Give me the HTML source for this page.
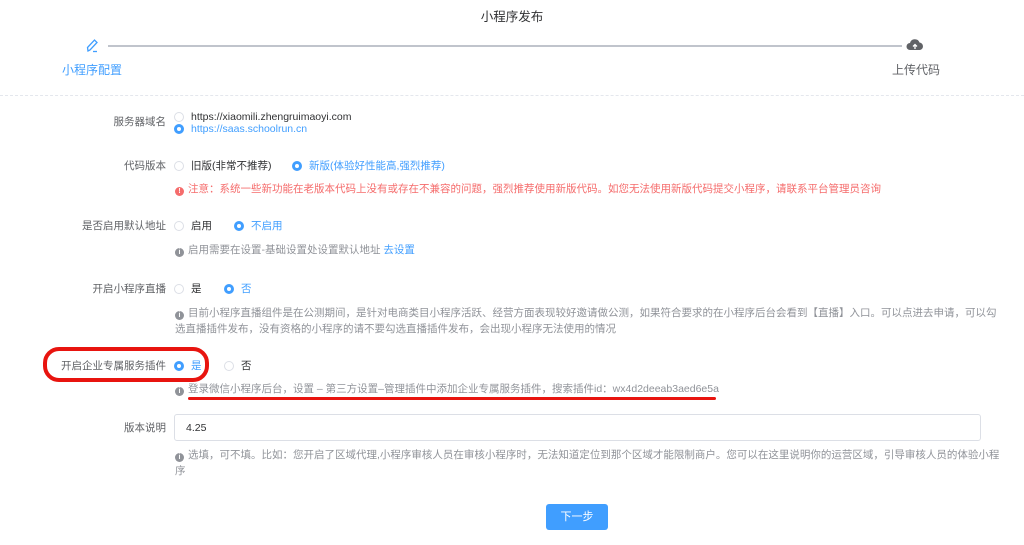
<!DOCTYPE html>
<html><head><meta charset="utf-8"><style>
*{margin:0;padding:0;box-sizing:border-box}
body{width:1024px;height:545px;background:#fff;position:relative;overflow:hidden;font-family:"Liberation Sans","Noto Sans CJK SC",sans-serif;font-size:10.5px;color:#606266}
.a{position:absolute;white-space:nowrap;line-height:14px}
.lbl{position:absolute;right:858px;white-space:nowrap;line-height:14px;color:#606266}
.r{position:absolute;width:10px;height:10px;border-radius:50%;border:1px solid #dcdfe6;background:#fff}
.r.on{border:3px solid #409eff;background:#fff}
.blue{color:#409eff}
.note{color:#909399}
.i{display:inline-block;width:9px;height:9px;border-radius:50%;background:#909399;color:#fff;font-size:7px;line-height:9px;text-align:center;font-weight:bold;margin-right:4px;vertical-align:-1px}
</style></head><body>
<div class="a" style="left:0;width:1024px;text-align:center;top:10px;font-size:12.5px;color:#303133">小程序发布</div>
<div style="position:absolute;left:108px;top:45px;width:794px;height:2px;background:#c0c4cc"></div>
<svg style="position:absolute;left:84px;top:37px" width="18" height="18" viewBox="0 0 18 18"><path d="M4 14 L3.5 10.5 L10.5 3 L13 5.5 L6 13 Z" fill="none" stroke="#409eff" stroke-width="1.3"/><path d="M9 14.5 H13" stroke="#409eff" stroke-width="1.3"/></svg>
<svg style="position:absolute;left:906px;top:38px" width="18" height="14" viewBox="0 0 18 14"><path d="M4 12 A3.5 3.5 0 0 1 4 5 A5 5 0 0 1 13.5 4.5 A3.8 3.8 0 0 1 14 12 Z" fill="#606266"/><path d="M9 11 V7 M7 8.5 L9 6.5 L11 8.5" stroke="#fff" stroke-width="1.3" fill="none"/></svg>
<div class="a blue" style="left:62px;top:63px;font-size:12px">小程序配置</div>
<div class="a" style="left:892px;top:63px;font-size:12px;color:#606266">上传代码</div>
<div style="position:absolute;left:0;top:95px;width:1024px;border-top:1px dashed #e4e7ed"></div>

<div class="lbl" style="top:115px">服务器域名</div>
<div class="r" style="left:174px;top:112px"></div>
<div class="a" style="left:191px;top:110px;color:#303133">https://xiaomili.zhengruimaoyi.com</div>
<div class="r on" style="left:174px;top:124px"></div>
<div class="a blue" style="left:191px;top:122px">https://saas.schoolrun.cn</div>

<div class="lbl" style="top:159px">代码版本</div>
<div class="r" style="left:174px;top:161px"></div>
<div class="a" style="left:191px;top:159px;color:#303133">旧版(非常不推荐)</div>
<div class="r on" style="left:292px;top:161px"></div>
<div class="a blue" style="left:309px;top:159px">新版(体验好性能高,强烈推荐)</div>
<div class="a" style="left:175px;top:182px;color:#f56c6c"><span class="i" style="background:#f56c6c">!</span>注意：系统一些新功能在老版本代码上没有或存在不兼容的问题，强烈推荐使用新版代码。如您无法使用新版代码提交小程序，请联系平台管理员咨询</div>

<div class="lbl" style="top:219px">是否启用默认地址</div>
<div class="r" style="left:174px;top:221px"></div>
<div class="a" style="left:191px;top:219px;color:#303133">启用</div>
<div class="r on" style="left:234px;top:221px"></div>
<div class="a blue" style="left:251px;top:219px">不启用</div>
<div class="a note" style="left:175px;top:243px"><span class="i">i</span>启用需要在设置-基础设置处设置默认地址 <span class="blue">去设置</span></div>

<div class="lbl" style="top:282px">开启小程序直播</div>
<div class="r" style="left:174px;top:284px"></div>
<div class="a" style="left:191px;top:282px;color:#303133">是</div>
<div class="r on" style="left:224px;top:284px"></div>
<div class="a blue" style="left:241px;top:282px">否</div>
<div class="a note" style="left:175px;top:306px"><span class="i">i</span>目前小程序直播组件是在公测期间，是针对电商类目小程序活跃、经营方面表现较好邀请做公测，如果符合要求的在小程序后台会看到【直播】入口。可以点进去申请，可以勾</div>
<div class="a note" style="left:175px;top:322px">选直播插件发布，没有资格的小程序的请不要勾选直播插件发布，会出现小程序无法使用的情况</div>

<div class="lbl" style="top:359px">开启企业专属服务插件</div>
<div class="r on" style="left:174px;top:361px"></div>
<div class="a blue" style="left:191px;top:359px">是</div>
<div class="r" style="left:224px;top:361px"></div>
<div class="a" style="left:241px;top:359px;color:#303133">否</div>
<div style="position:absolute;left:43px;top:347px;width:166px;height:35px;border:4px solid #e8140f;border-radius:16px"></div>
<div class="a note" style="left:175px;top:382px"><span class="i">i</span>登录微信小程序后台，设置 – 第三方设置–管理插件中添加企业专属服务插件，搜索插件id：wx4d2deeab3aed6e5a</div>
<div style="position:absolute;left:188px;top:397px;width:528px;height:3px;background:#e8140f;border-radius:2px"></div>

<div class="lbl" style="top:421px">版本说明</div>
<div style="position:absolute;left:174px;top:414px;width:807px;height:27px;border:1px solid #dcdfe6;border-radius:3px"></div>
<div class="a" style="left:186px;top:421px;color:#303133">4.25</div>
<div class="a note" style="left:175px;top:448px"><span class="i">i</span>选填，可不填。比如：您开启了区域代理,小程序审核人员在审核小程序时，无法知道定位到那个区域才能限制商户。您可以在这里说明你的运营区域，引导审核人员的体验小程</div>
<div class="a note" style="left:175px;top:464px">序</div>

<div style="position:absolute;left:546px;top:504px;width:62px;height:26px;background:#409eff;border-radius:3px;color:#fff;text-align:center;line-height:26px;font-size:11px">下一步</div>
</body></html>
